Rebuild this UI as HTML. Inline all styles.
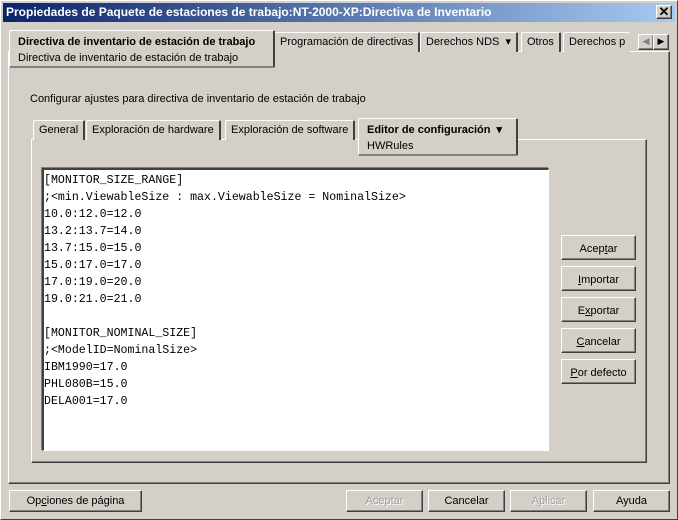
<!DOCTYPE html>
<html><head><meta charset="utf-8"><style>
*{margin:0;padding:0;box-sizing:border-box}
body{width:678px;height:520px;background:#d4d0c8;font-family:"Liberation Sans",sans-serif;font-size:11px;color:#000;position:relative;overflow:hidden}
.a{position:absolute}
.out{border-top:1px solid #fff;border-left:1px solid #fff;border-right:1px solid #404040;border-bottom:1px solid #404040;box-shadow:inset -1px -1px 0 #808080}
.tab{position:absolute;background:#d4d0c8;border-top:1px solid #fff;border-left:1px solid #fff;border-right:2px solid #404040;padding:0 5px;line-height:18px;white-space:nowrap;border-radius:2px 2px 0 0}
.btn{position:absolute;background:#d4d0c8;border-top:1px solid #fff;border-left:1px solid #fff;border-right:1px solid #404040;border-bottom:1px solid #404040;box-shadow:inset -1px -1px 0 #808080;text-align:center;font-size:11px}
.dis{color:#a0a0a0;text-shadow:1px 1px 0 #fff}
pre{font-family:"Liberation Mono",monospace;font-size:11.6px;line-height:17px}
</style></head><body>
<div class="a" style="left:0;top:0;width:678px;height:520px;border:1px solid #fff;border-right-color:#404040;border-bottom-color:#404040"></div>
<div class="a" style="left:3px;top:3px;width:672px;height:19px;background:linear-gradient(90deg,#0a246a,#a6caf0);color:#fff;font-weight:bold;font-size:12px;line-height:19px;padding-left:3px">Propiedades de Paquete de estaciones de trabajo:NT-2000-XP:Directiva de Inventario</div>
<div class="btn" style="left:656px;top:5px;width:16px;height:14px;line-height:12px;font-size:13px;font-weight:bold">✕</div>

<div class="a out" style="left:8px;top:51px;width:662px;height:433px"></div>
<div class="tab" style="left:274px;top:32px;height:20px">Programación de directivas</div>
<div class="tab" style="left:420px;top:32px;height:20px">Derechos NDS&nbsp; ▾</div>
<div class="tab" style="left:521px;top:32px;height:20px">Otros</div>
<div class="tab" style="left:563px;top:32px;width:67px;height:20px;overflow:hidden;border-right:none">Derechos p</div>
<div class="btn" style="left:638px;top:34px;width:16px;height:16px;line-height:13px;font-size:9px;color:#808080">◀</div>
<div class="btn" style="left:653px;top:34px;width:16px;height:16px;line-height:13px;font-size:9px">▶</div>
<div class="a" style="left:9px;top:30px;width:266px;height:38px;background:#d4d0c8;border-top:1px solid #fff;border-left:1px solid #fff;border-right:2px solid #404040;border-bottom:2px solid #808080;border-radius:2px;padding:3px 8px;line-height:16px"><b>Directiva de inventario de estación de trabajo</b><br>Directiva de inventario de estación de trabajo</div>

<div class="a" style="left:30px;top:93px">Configurar ajustes para directiva de inventario de estación de trabajo</div>

<div class="a out" style="left:31px;top:139px;width:616px;height:324px"></div>
<div class="tab" style="left:33px;top:120px;height:20px">General</div>
<div class="tab" style="left:86px;top:120px;height:20px">Exploración de hardware</div>
<div class="tab" style="left:225px;top:120px;height:20px">Exploración de software</div>
<div class="a" style="left:358px;top:118px;width:160px;height:38px;background:#d4d0c8;border-top:1px solid #fff;border-left:1px solid #fff;border-right:2px solid #404040;border-bottom:2px solid #808080;border-radius:2px;padding:3px 8px;line-height:16px"><b>Editor de configuración&nbsp; ▾</b><br>HWRules</div>

<div class="a" style="left:42px;top:168px;width:507px;height:283px;background:#fff;border-top:2px solid #404040;border-left:2px solid #404040;border-right:1px solid #fff;border-bottom:1px solid #fff;box-shadow:-1px -1px 0 #808080;padding:2px 0 0 0">
<pre>[MONITOR_SIZE_RANGE]
;&lt;min.ViewableSize : max.ViewableSize = NominalSize&gt;
10.0:12.0=12.0
13.2:13.7=14.0
13.7:15.0=15.0
15.0:17.0=17.0
17.0:19.0=20.0
19.0:21.0=21.0

[MONITOR_NOMINAL_SIZE]
;&lt;ModelID=NominalSize&gt;
IBM1990=17.0
PHL080B=15.0
DELA001=17.0</pre></div>

<div class="btn" style="left:561px;top:235px;width:75px;height:25px;line-height:26px">Acep<u>t</u>ar</div>
<div class="btn" style="left:561px;top:266px;width:75px;height:25px;line-height:26px"><u>I</u>mportar</div>
<div class="btn" style="left:561px;top:297px;width:75px;height:25px;line-height:26px">E<u>x</u>portar</div>
<div class="btn" style="left:561px;top:328px;width:75px;height:25px;line-height:26px"><u>C</u>ancelar</div>
<div class="btn" style="left:561px;top:359px;width:75px;height:25px;line-height:26px"><u>P</u>or defecto</div>

<div class="btn" style="left:9px;top:490px;width:133px;height:22px;line-height:21px">Op<u>c</u>iones de página</div>
<div class="btn dis" style="left:346px;top:490px;width:77px;height:22px;line-height:21px">Aceptar</div>
<div class="btn" style="left:428px;top:490px;width:77px;height:22px;line-height:21px">Cancelar</div>
<div class="btn dis" style="left:510px;top:490px;width:77px;height:22px;line-height:21px">Aplicar</div>
<div class="btn" style="left:593px;top:490px;width:77px;height:22px;line-height:21px">Ayuda</div>
</body></html>
